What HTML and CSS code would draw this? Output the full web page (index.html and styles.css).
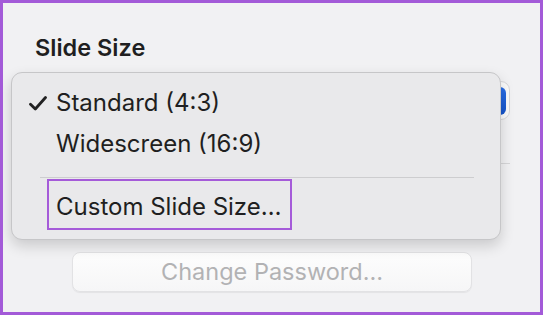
FILE: index.html
```html
<!DOCTYPE html>
<html>
<head>
<meta charset="utf-8">
<link rel="stylesheet" href="styles.css">
</head>
<body>
<div class="frame">
  <div class="panel">
    <div class="label">Slide Size</div>
    <div class="popup"><span class="popup-arrow"></span></div>
    <div class="divider"></div>
    <div class="btn">Change Password…</div>
  </div>
  <div class="menu">
    <div class="item">
      <span class="check-slot"><svg class="check" width="18" height="15" viewBox="0 0 18 15"><path d="M1.5 8.2 L6.3 13 L16.5 1.5" fill="none" stroke="#222" stroke-width="2.8" stroke-linecap="round" stroke-linejoin="round"/></svg></span>
      <span>Standard (4:3)</span>
    </div>
    <div class="item">
      <span class="check-slot"></span>
      <span>Widescreen (16:9)</span>
    </div>
    <div class="menu-sep"></div>
    <div class="custom">Custom Slide Size…</div>
  </div>
</div>
</body>
</html>
```

FILE: styles.css
```css
html, body {
  margin: 0;
  padding: 0;
  background: #ffffff;
}
body {
  width: 544px;
  height: 316px;
  overflow: hidden;
  font-family: Inter, "Noto Sans", sans-serif;
  color: #1f1f21;
}
.frame {
  position: relative;
  box-sizing: border-box;
  width: 543px;
  height: 315px;
  border: 3px solid #a35ad8;
  background: #f1f1f3;
  overflow: hidden;
}
.panel {
  display: flex;
  flex-direction: column;
  padding: 31px 30px 0 32px;
}
.label {
  font-size: 23.5px;
  font-weight: 600;
  line-height: 28px;
  color: #1f1f21;
}
.popup {
  align-self: flex-end;
  margin-top: 19px;
  width: 200px;
  height: 39px;
  box-sizing: border-box;
  border-radius: 9px;
  background: #fafafa;
  border: 1px solid #d8d8da;
  display: flex;
  justify-content: flex-end;
  align-items: center;
  padding-right: 3px;
}
.popup-arrow {
  width: 26px;
  height: 28px;
  border-radius: 6px;
  background: linear-gradient(#2a6ee6, #1452c8);
}
.divider {
  margin-top: 43px;
  height: 1px;
  background: #d6d6d8;
}
.btn {
  align-self: flex-start;
  margin-top: 88px;
  margin-left: 37px;
  width: 400px;
  height: 40px;
  box-sizing: border-box;
  border: 1px solid #e2e2e4;
  border-radius: 8px;
  background: linear-gradient(#fdfdfd, #f6f6f7);
  box-shadow: 0 1px 1px rgba(0,0,0,0.06);
  text-align: center;
  font-size: 23.5px;
  line-height: 38px;
  color: #b2b2b4;
}
.menu {
  position: absolute;
  left: 8px;
  top: 69px;
  width: 490px;
  height: 168px;
  box-sizing: border-box;
  padding-top: 9px;
  background: #e9e9eb;
  border: 1px solid #c6c6c8;
  border-radius: 11px;
  box-shadow: 0 6px 14px rgba(0,0,0,0.16);
}
.item {
  display: flex;
  height: 41px;
  line-height: 41px;
  font-size: 24px;
  padding-left: 17px;
  color: #1f1f21;
}
.check-slot {
  width: 27px;
  flex: none;
}
.check {
  display: block;
  margin-top: 14px;
}
.menu-sep {
  margin: 13px 26px 0 28px;
  height: 1px;
  background: #cdcdcf;
}
.custom {
  margin-top: 1px;
  margin-left: 35px;
  width: 245px;
  height: 51px;
  box-sizing: border-box;
  border: 2px solid #a55bd9;
  padding: 4px 0 0 7px;
  line-height: 43px;
  font-size: 24px;
  color: #1f1f21;
}
```
